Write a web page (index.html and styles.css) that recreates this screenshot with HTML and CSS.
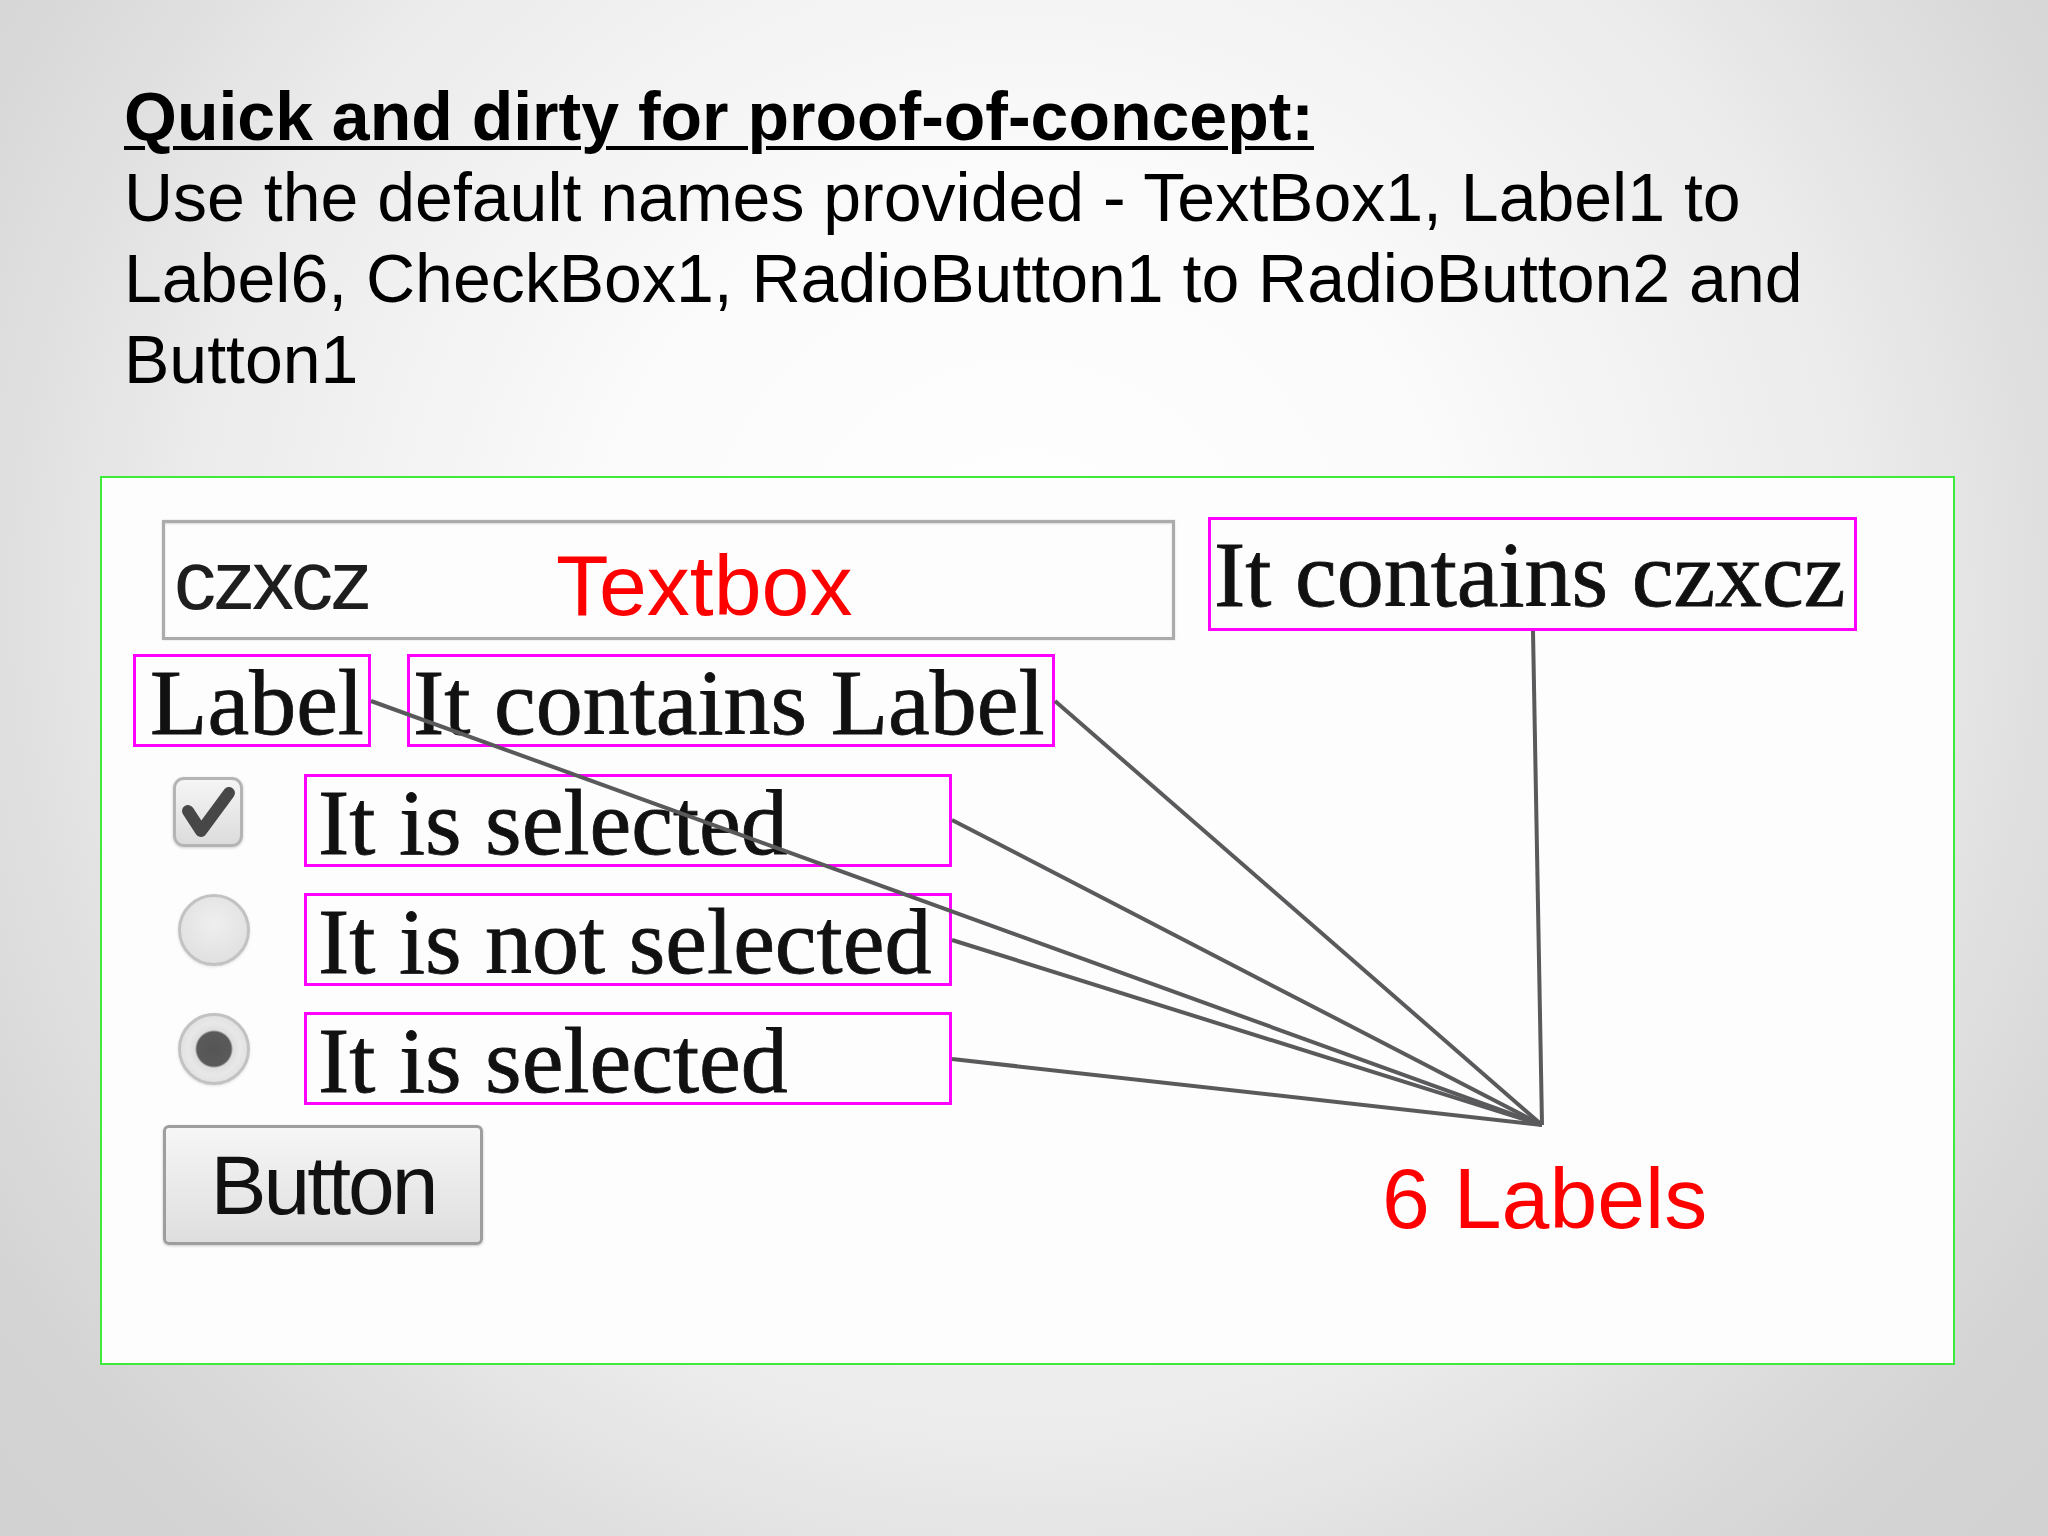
FILE: index.html
```html
<!DOCTYPE html>
<html lang="en">
<head>
  <meta charset="UTF-8" />
  <title>Quick and dirty for proof-of-concept</title>
  <link rel="stylesheet" href="styles.css">
</head>
<body>
  <div class="slide-text">
    <h1 class="title">Quick and dirty for proof-of-concept:</h1>
    <p class="intro">Use the default names provided - TextBox1, Label1 to<br>Label6, CheckBox1, RadioButton1 to RadioButton2 and<br>Button1</p>
  </div>

  <div class="panel">
    <div class="row row-text">
      <div class="textbox-wrap">
        <input class="textbox" type="text" value="czxcz" readonly>
        <span class="note note-textbox">Textbox</span>
      </div>
      <span class="lbl lbl-result">It contains czxcz</span>
    </div>

    <div class="row row-label">
      <span class="lbl lbl-short">Label</span>
      <span class="lbl lbl-wide">It contains Label</span>
    </div>

    <div class="row row-option first">
      <div class="ctrl">
        <span class="checkbox">
          <svg viewBox="0 0 64 64" width="64" height="64"><polyline points="12,31 25,51 53,13" fill="none" stroke="#474747" stroke-width="12" stroke-linejoin="round" stroke-linecap="round"/></svg>
        </span>
      </div>
      <span class="lbl lbl-opt">It is selected</span>
    </div>

    <div class="row row-option">
      <div class="ctrl"><span class="radio"></span></div>
      <span class="lbl lbl-opt">It is not selected</span>
    </div>

    <div class="row row-option">
      <div class="ctrl"><span class="radio checked"></span></div>
      <span class="lbl lbl-opt">It is selected</span>
    </div>

    <button class="btn" type="button">Button</button>

    <span class="note note-labels">6 Labels</span>

    <!-- leader lines from each label to the "6 Labels" note -->
    <svg class="leaders" width="1851" height="885" viewBox="0 0 1851 885">
      <g stroke="#5a5a5c" stroke-width="4" fill="none">
        <line x1="269" y1="223" x2="1440" y2="647"/>
        <line x1="953" y1="223" x2="1440" y2="647"/>
        <line x1="850" y1="342" x2="1440" y2="647"/>
        <line x1="850" y1="462" x2="1440" y2="647"/>
        <line x1="850" y1="581" x2="1440" y2="647"/>
        <line x1="1431" y1="153" x2="1440" y2="647"/>
      </g>
    </svg>
  </div>
</body>
</html>
```

FILE: styles.css
```css
html, body {
  height: 100%;
}

body {
  margin: 0;
  padding: 76px 0 0 100px;
  box-sizing: border-box;
  font-family: "Liberation Sans", Arial, sans-serif;
  color: #000;
  background: radial-gradient(circle farthest-corner at 50% 39%, #ffffff 0%, #fbfbfb 30%, #ebebeb 61%, #dedede 75%, #d4d4d4 88%, #d2d2d2 100%);
  overflow: hidden;
}

.slide-text {
  margin-left: 24px;
  font-size: 68px;
  line-height: 81px;
}

.title {
  margin: 0;
  font-size: 68px;
  font-weight: bold;
  text-decoration: underline;
  text-decoration-thickness: 4px;
  text-underline-offset: 6px;
}

.intro {
  margin: 0;
}

/* the form area */
.panel {
  position: relative;
  margin-top: 76px;
  width: 1855px;
  height: 889px;
  box-sizing: border-box;
  border: 2px solid #3deb3d;
  background: #fdfdfd;
  padding-top: 39px;
  display: flex;
  flex-direction: column;
  align-items: flex-start;
}

.row {
  display: flex;
  align-items: flex-start;
}

.row-text {
  margin-left: 60px;
  gap: 33px;
}

.row-label {
  margin-top: 14px;
  margin-left: 31px;
  gap: 36px;
}

.row-option {
  margin-top: 26px;
  margin-left: 71px;
}

.row-option.first {
  margin-top: 27px;
}

.textbox-wrap {
  position: relative;
  margin-top: 3px;
}

.textbox {
  display: block;
  width: 1013px;
  height: 120px;
  box-sizing: border-box;
  margin: 0;
  padding: 0 0 0 9px;
  border: 3px solid #ababab;
  box-shadow: inset 0 1px 2px rgba(0,0,0,0.15), 0 0 2px rgba(0,0,0,0.15);
  background: #fdfdfd;
  font-family: "Liberation Sans", Arial, sans-serif;
  font-size: 84px;
  letter-spacing: -3px;
  color: #1e1e1e;
  outline: none;
}

.note {
  font-family: "Liberation Sans", Arial, sans-serif;
  font-size: 86px;
  line-height: 1;
  color: #ff0000;
  white-space: nowrap;
}

.note-textbox {
  position: absolute;
  left: 394px;
  top: 22px;
}

.note-labels {
  position: absolute;
  left: 1280px;
  top: 677px;
}

/* serif labels with magenta outline */
.lbl {
  display: block;
  box-sizing: border-box;
  height: 93px;
  border: 3px solid #ff00ff;
  font-family: "Liberation Serif", "Times New Roman", serif;
  font-size: 94px;
  line-height: 84px;
  padding-top: 3px;
  color: #111;
  -webkit-text-stroke: 0.8px #111;
  white-space: nowrap;
}

.lbl-result {
  width: 649px;
  height: 114px;
  line-height: 108px;
  padding: 0 0 0 3px;
}

.lbl-short {
  width: 238px;
  padding-left: 14px;
}

.lbl-wide {
  width: 648px;
  padding-left: 3px;
}

.lbl-opt {
  width: 648px;
  padding-left: 11px;
}

.ctrl {
  width: 131px;
  flex: none;
}

.checkbox {
  display: flex;
  align-items: center;
  justify-content: center;
  width: 70px;
  height: 70px;
  margin-top: 3px;
  box-sizing: border-box;
  border: 3px solid #b4b4b4;
  border-radius: 11px;
  background: linear-gradient(#f5f5f5, #dcdcdc);
  box-shadow: 0 1px 3px rgba(0,0,0,0.18);
}

.radio {
  display: block;
  width: 72px;
  height: 72px;
  margin: 1px 0 0 5px;
  box-sizing: border-box;
  border: 3px solid #c2c2c2;
  border-radius: 50%;
  background: radial-gradient(circle at 50% 40%, #efefef, #dcdcdc);
  box-shadow: 0 1px 3px rgba(0,0,0,0.12);
}

.radio.checked {
  background: radial-gradient(circle, #555 0, #5a5a5a 17px, #dedede 19px, #e8e8e8 26px, #d6d6d6 100%);
}

.btn {
  margin: 20px 0 0 61px;
  width: 320px;
  height: 120px;
  box-sizing: border-box;
  border: 3px solid #9e9e9e;
  border-radius: 6px;
  background: linear-gradient(#f6f6f6, #dedede);
  box-shadow: 0 1px 3px rgba(0,0,0,0.2);
  font-family: "Liberation Sans", Arial, sans-serif;
  font-size: 84px;
  letter-spacing: -3px;
  color: #111;
  padding: 0;
}

.leaders {
  position: absolute;
  left: 0;
  top: 0;
  pointer-events: none;
}
```
